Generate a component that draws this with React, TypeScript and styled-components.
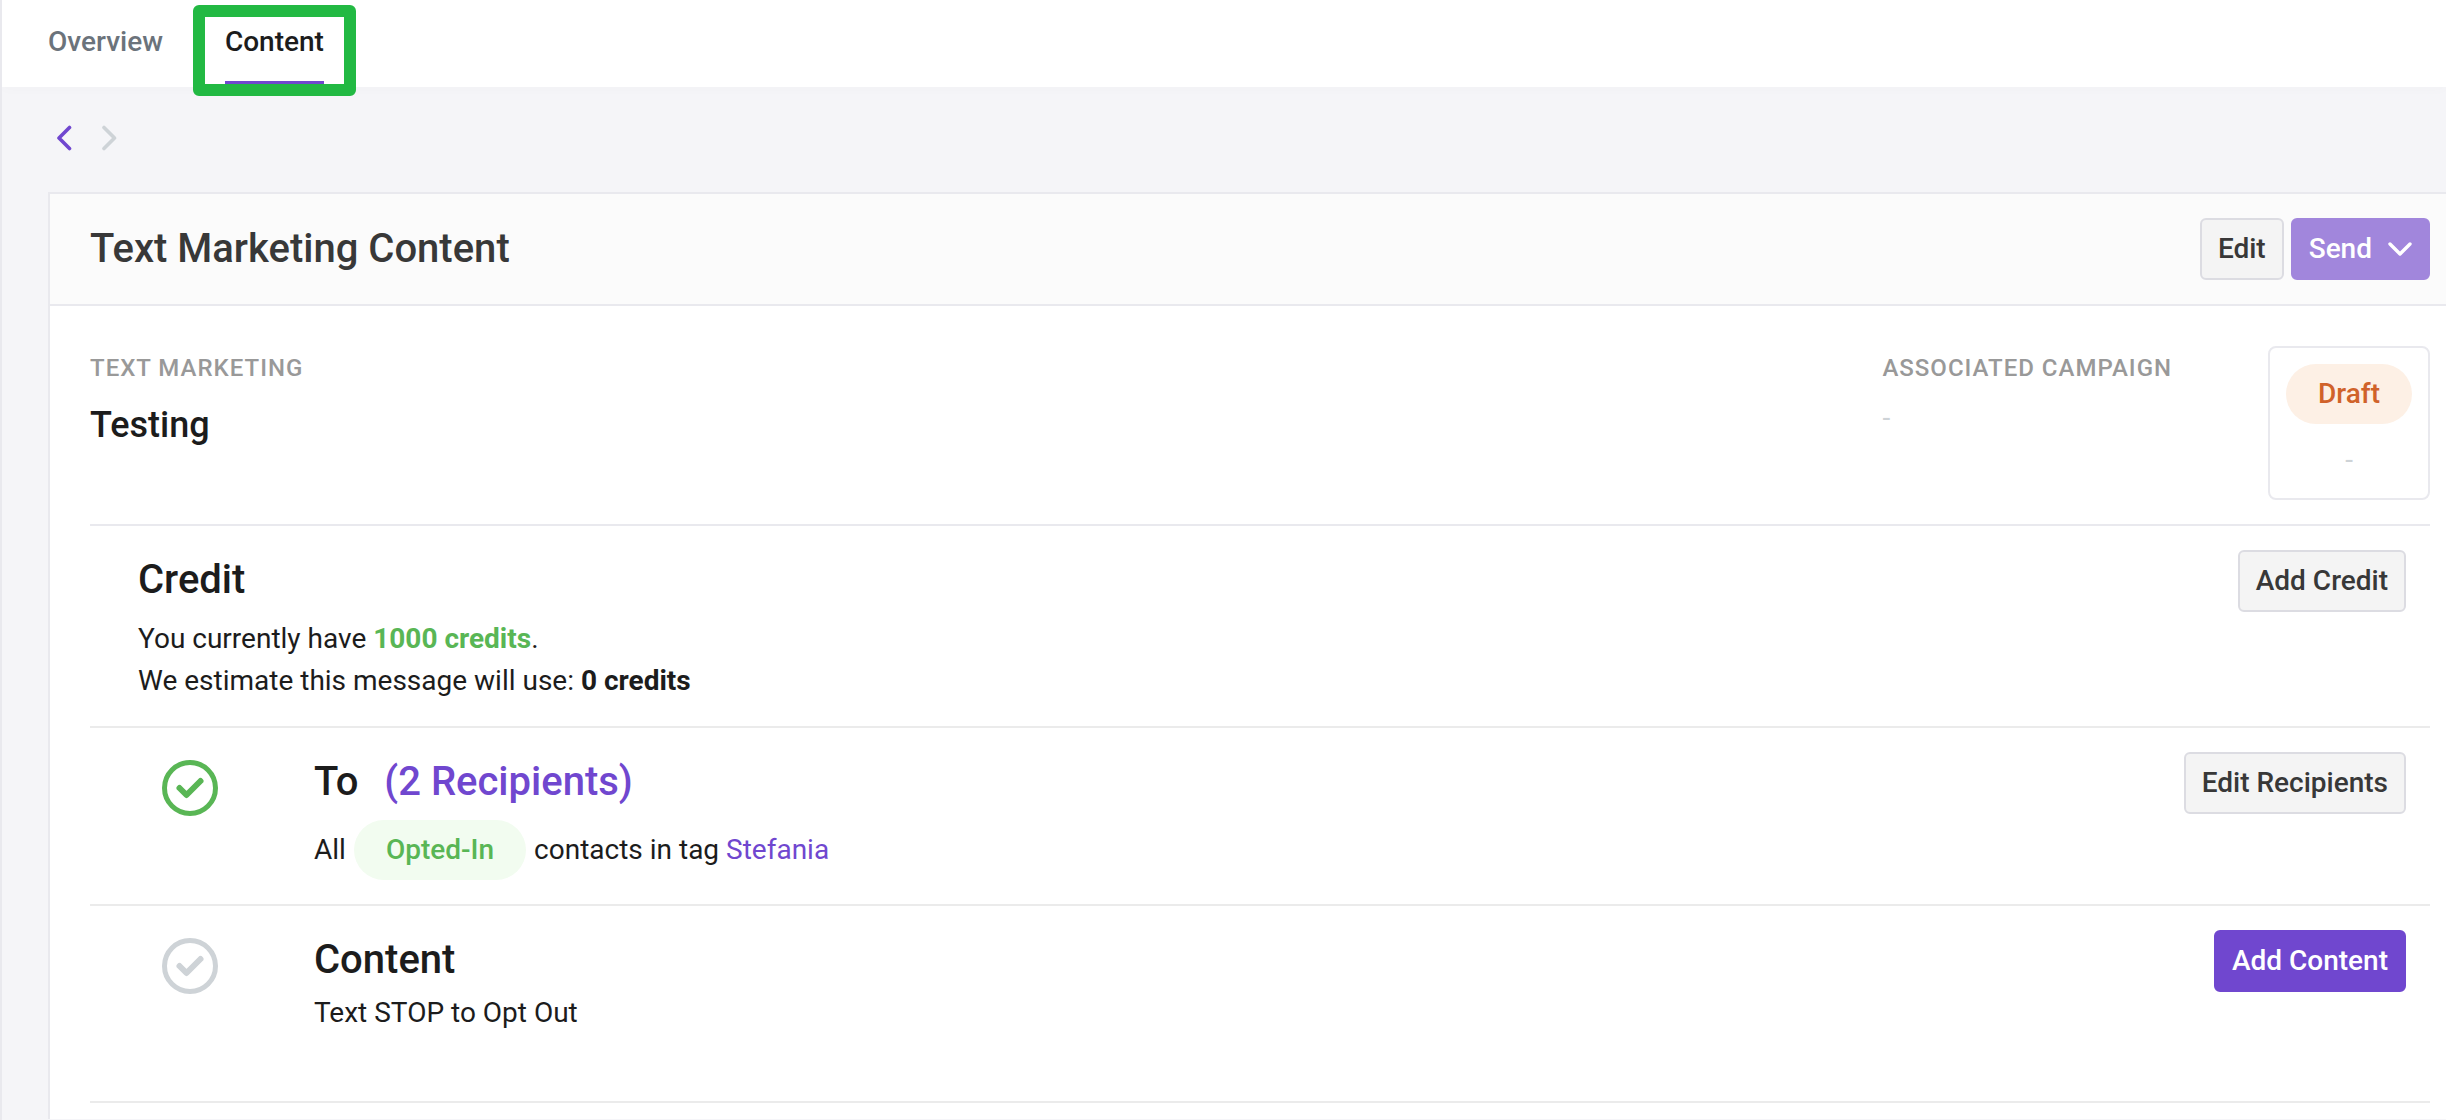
import React from "react";
import styled, { createGlobalStyle } from "styled-components";

const color = {
  text: "#1c1c1c",
  heading: "#383838",
  purple: "#7047cf",
  green: "#59b655",
  line: "#e9e9ee",
  muted: "#ced3d7",
};

const GlobalStyle = createGlobalStyle`
  * { box-sizing: border-box; }
  body {
    margin: 0;
    background: #f5f5f8;
    color: ${color.text};
    font-family: Roboto, "Liberation Sans", sans-serif;
    font-size: 28px;
    line-height: 42px;
  }
  h1, h2, h3, p { margin: 0; font-weight: 500; }
  a { color: inherit; text-decoration: none; }
  svg { display: block; fill: none; stroke: currentColor; stroke-linecap: round; stroke-linejoin: round; }
`;

const Page = styled.div`
  min-height: 100vh;
  border-left: 2px solid ${color.line};
  overflow: hidden;
`;

const TabBar = styled.nav`
  display: flex;
  gap: 62px;
  padding: 21px 46px 0;
  background: #fff;
  border-bottom: 1px solid #fff;
  box-shadow: 0 2px 12px rgba(0, 0, 0, 0.02);
`;

const Tab = styled.a<{ $active?: boolean }>`
  position: relative;
  padding-bottom: 18px;
  border-bottom: 5px solid ${(p) => (p.$active ? color.purple : "transparent")};
  font-weight: 500;
  color: ${(p) => (p.$active ? color.text : "#6b737b")};
`;

const Highlight = styled.span`
  position: absolute;
  inset: -16px -32px -15px;
  border: 12px solid #22b943;
  border-radius: 6px;
  pointer-events: none;
`;

const Pager = styled.div`
  display: flex;
  align-items: center;
  gap: 16px;
  height: 105px;
  padding: 0 48px 4px;
`;

const PagerButton = styled.button`
  display: flex;
  padding: 2px 7px;
  border: 0;
  background: none;
  color: ${color.purple};
  &:disabled { color: ${color.muted}; }
`;

const Card = styled.main`
  margin-left: 46px;
  border: solid ${color.line};
  border-width: 2px 0 0 2px;
  background: #fff;
`;

const CardHeader = styled.header`
  display: flex;
  align-items: center;
  justify-content: space-between;
  padding: 24px 16px 24px 40px;
  border-bottom: 2px solid ${color.line};
  background: #fbfbfb;
`;

const CardTitle = styled.h1`
  font-size: 40px;
  line-height: 60px;
  color: ${color.heading};
`;

const Actions = styled.div`
  display: flex;
  gap: 7px;
`;

const Button = styled.button<{ $primary?: boolean }>`
  display: flex;
  align-items: center;
  gap: 16px;
  flex: none;
  height: 62px;
  padding: 0 16px;
  border: 2px solid ${(p) => (p.$primary ? color.purple : "#dcdce2")};
  border-radius: 6px;
  background: ${(p) => (p.$primary ? color.purple : "#f4f4f4")};
  color: ${(p) => (p.$primary ? "#fff" : color.heading)};
  font: 500 28px/42px Roboto, "Liberation Sans", sans-serif;
  &:disabled { background: #a186dc; border-color: #a186dc; }
`;

const CardBody = styled.div`
  padding: 40px 16px 16px 40px;
`;

const Summary = styled.section`
  display: flex;
  align-items: flex-start;
  gap: 96px;
  padding-bottom: 24px;
`;

const Field = styled.div<{ $grow?: boolean }>`
  display: grid;
  gap: 8px;
  flex: ${(p) => (p.$grow ? "1" : "none")};
`;

const Label = styled.h2`
  font-size: 24px;
  line-height: 44px;
  letter-spacing: 1px;
  text-transform: uppercase;
  color: #999;
`;

const Name = styled.p`
  font-size: 36px;
  line-height: 54px;
`;

const Empty = styled.p`
  line-height: 40px;
  font-weight: 400;
  color: ${color.muted};
`;

const Status = styled.div`
  display: grid;
  justify-items: center;
  gap: 16px;
  padding: 16px 16px 18px;
  border: 2px solid ${color.line};
  border-radius: 8px;
`;

const Pill = styled.span<{ $tone: "draft" | "success" }>`
  display: inline-block;
  padding: 0 32px;
  border-radius: 30px;
  line-height: 60px;
  font-weight: 500;
  background: ${(p) => (p.$tone === "draft" ? "#fdf0e5" : "#f2fcf0")};
  color: ${(p) => (p.$tone === "draft" ? "#d0622a" : color.green)};
`;

const Row = styled.section<{ $step?: boolean }>`
  display: flex;
  align-items: flex-start;
  gap: 96px;
  padding: 24px 24px 24px ${(p) => (p.$step ? 72 : 48)}px;
  border-top: 2px solid ${(p) => (p.$step ? "#ebebeb" : color.line)};
`;

const RowBody = styled.div<{ $tight?: boolean }>`
  display: grid;
  gap: ${(p) => (p.$tight ? 2 : 8)}px;
  flex: 1;
`;

const RowTitle = styled.h3`
  display: flex;
  gap: 26px;
  font-size: 40px;
  line-height: 60px;
`;

const Copy = styled.p`
  font-weight: 400;
`;

const Audience = styled(Copy)`
  display: flex;
  align-items: center;
  gap: 8px;
`;

const Strong = styled.strong<{ $green?: boolean }>`
  font-weight: 700;
  color: ${(p) => (p.$green ? color.green : "inherit")};
`;

const Link = styled.a`
  color: ${color.purple};
`;

const StepIcon = styled.span<{ $done?: boolean }>`
  flex: none;
  margin-top: 8px;
  color: ${(p) => (p.$done ? color.green : color.muted)};
`;

const LastRow = styled(Row)`
  padding-bottom: 67px;
`;

const End = styled.hr`
  margin: 0;
  border: 0;
  border-top: 2px solid #ebebeb;
`;

function Check({ done }: { done?: boolean }) {
  return (
    <StepIcon $done={done}>
      <svg width="56" height="56" viewBox="0 0 56 56">
        <circle cx="28" cy="28" r="25.5" strokeWidth="5" />
        <path d="M17.5 28L24.5 35L38.5 21" strokeWidth="6" />
      </svg>
    </StepIcon>
  );
}

export default function App() {
  return (
    <>
      <GlobalStyle />
      <Page>
        <TabBar>
          <Tab href="#overview">Overview</Tab>
          <Tab href="#content" $active>
            Content
            <Highlight />
          </Tab>
        </TabBar>
        <Pager>
          <PagerButton aria-label="Previous">
            <svg width="15" height="26" viewBox="0 0 15 26" strokeWidth="3.6">
              <path d="M12.5 2.5L2 13L12.5 23.5" />
            </svg>
          </PagerButton>
          <PagerButton aria-label="Next" disabled>
            <svg width="15" height="26" viewBox="0 0 15 26" strokeWidth="3.6">
              <path d="M2 2.5L12.5 13L2 23.5" />
            </svg>
          </PagerButton>
        </Pager>
        <Card>
          <CardHeader>
            <CardTitle>Text Marketing Content</CardTitle>
            <Actions>
              <Button>Edit</Button>
              <Button $primary disabled>
                Send
                <svg width="24" height="14" viewBox="0 0 24 14" strokeWidth="3.4">
                  <path d="M2 2L12 12L22 2" />
                </svg>
              </Button>
            </Actions>
          </CardHeader>
          <CardBody>
            <Summary>
              <Field $grow>
                <Label>Text Marketing</Label>
                <Name>Testing</Name>
              </Field>
              <Field>
                <Label>Associated Campaign</Label>
                <Empty>-</Empty>
              </Field>
              <Status>
                <Pill $tone="draft">Draft</Pill>
                <Empty>-</Empty>
              </Status>
            </Summary>
            <Row>
              <RowBody>
                <RowTitle>Credit</RowTitle>
                <Copy>
                  You currently have <Strong $green>1000 credits</Strong>.<br />
                  We estimate this message will use: <Strong>0 credits</Strong>
                </Copy>
              </RowBody>
              <Button>Add Credit</Button>
            </Row>
            <Row $step>
              <Check done />
              <RowBody>
                <RowTitle>
                  To <Link href="#recipients">(2 Recipients)</Link>
                </RowTitle>
                <Audience>
                  <span>All</span>
                  <Pill $tone="success">Opted-In</Pill>
                  <span>
                    contacts in tag <Link href="#stefania">Stefania</Link>
                  </span>
                </Audience>
              </RowBody>
              <Button>Edit Recipients</Button>
            </Row>
            <LastRow $step>
              <Check />
              <RowBody $tight>
                <RowTitle>Content</RowTitle>
                <Copy>Text STOP to Opt Out</Copy>
              </RowBody>
              <Button $primary>Add Content</Button>
            </LastRow>
            <End />
          </CardBody>
        </Card>
      </Page>
    </>
  );
}
